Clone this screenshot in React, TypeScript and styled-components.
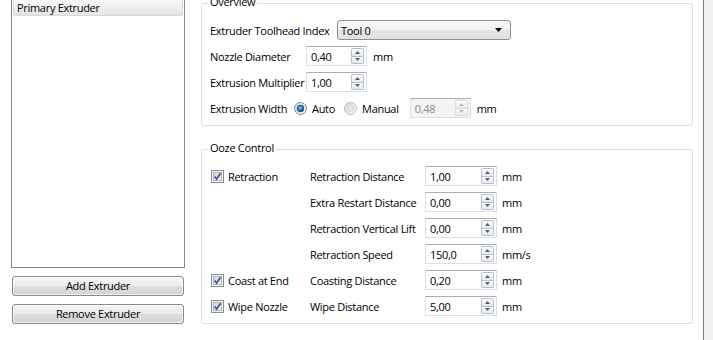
import React from 'react';
import styled, { createGlobalStyle, css } from 'styled-components';

const GlobalStyle = createGlobalStyle`
  html, body {
    margin: 0;
    padding: 0;
    background: #fff;
  }
  body {
    font-family: "Open Sans", "Noto Sans", sans-serif;
    font-size: 11px;
    letter-spacing: -0.3px;
    color: #000;
    overflow: hidden;
  }
`;

const Page = styled.div`
  display: flex;
  width: 713px;
  height: 340px;
  overflow: hidden;
  background: #fff;
`;

const Sidebar = styled.div`
  display: flex;
  flex-direction: column;
  gap: 8px;
  width: 174px;
  margin-left: 11px;
`;

const ListBox = styled.div`
  box-sizing: border-box;
  height: 271px;
  margin-top: -3px;
  border: 1px solid #828790;
  background: #fff;
`;

const ListItem = styled.div<{ $selected?: boolean }>`
  margin: 0 1px;
  padding: 1px 3px 0;
  line-height: 15px;
  border: 1px solid transparent;
  border-radius: 2px;
  white-space: nowrap;
  ${(p) =>
    p.$selected &&
    css`
      border-color: #d9d9d9;
      background: linear-gradient(#fafafa, #e5e5e5);
    `}
`;

const PushButton = styled.button`
  box-sizing: border-box;
  height: 20px;
  margin: 0 1px;
  padding: 0;
  border: 1px solid #8a8a8a;
  border-radius: 3px;
  background: linear-gradient(#f4f4f4 0%, #ececec 50%, #dfdfdf 51%, #d3d3d3 100%);
  box-shadow: inset 0 0 0 1px rgba(255, 255, 255, 0.7);
  font: inherit;
  letter-spacing: inherit;
  color: #000;
  line-height: 16px;
`;

const Main = styled.div`
  display: flex;
  flex-direction: column;
  gap: 14px;
  width: 492px;
  margin: -6px 0 0 16px;
`;

const GroupBox = styled.fieldset`
  box-sizing: border-box;
  margin: 0;
  min-width: 0;
  padding: 7px 8px;
  border: 1px solid #d5dfe5;
  border-radius: 3px;
`;

const GroupTitle = styled.legend`
  margin-left: -2px;
  padding: 0 2px 4px;
  line-height: 15px;
`;

const Rows = styled.div`
  display: flex;
  flex-direction: column;
  gap: 6px;
`;

const Row = styled.div`
  display: flex;
  align-items: center;
  gap: 6px;
  height: 20px;
`;

const Label = styled.span<{ $width?: number }>`
  flex: none;
  white-space: nowrap;
  ${(p) => p.$width !== undefined && `width: ${p.$width}px;`}
`;

const ComboBox = styled.div`
  box-sizing: border-box;
  display: flex;
  align-items: center;
  justify-content: space-between;
  width: 174px;
  height: 20px;
  padding: 0 8px 0 3px;
  border: 1px solid #8e8f8f;
  border-radius: 3px;
  background: linear-gradient(#f9f9f9 0%, #f0f0f0 50%, #e6e6e6 51%, #e0e0e0 100%);
`;

const SpinField = styled.div<{ $width: number; $disabled?: boolean; $offset?: number }>`
  box-sizing: border-box;
  display: flex;
  align-items: center;
  flex: none;
  width: ${(p) => p.$width}px;
  height: 20px;
  margin-left: ${(p) => p.$offset ?? 0}px;
  padding: 0 2px 0 4px;
  border: 1px solid #dbdfe6;
  border-top-color: #abadb3;
  background: ${(p) => (p.$disabled ? '#f4f4f4' : '#fff')};
  color: ${(p) => (p.$disabled ? '#8a8a8a' : '#000')};
`;

const SpinValue = styled.span`
  flex: 1;
  white-space: nowrap;
`;

const SpinButtons = styled.div`
  display: flex;
  flex-direction: column;
  width: 13px;
  height: 16px;
`;

const SpinButton = styled.div<{ $disabled?: boolean }>`
  flex: 1;
  display: flex;
  align-items: center;
  justify-content: center;
  border: 1px solid ${(p) => (p.$disabled ? '#dadcdf' : '#b9bfc8')};
  background: linear-gradient(#fdfdfd, #e6e9ee);
  &:first-child {
    border-radius: 2px 2px 0 0;
  }
  &:last-child {
    border-top: none;
    border-radius: 0 0 2px 2px;
  }
`;

const Option = styled.label<{ $offset?: number }>`
  display: flex;
  align-items: center;
  gap: 5px;
  margin-left: ${(p) => p.$offset ?? 0}px;
  white-space: nowrap;
`;

const OozeGrid = styled.div`
  display: grid;
  grid-template-columns: 95px 110px 72px auto;
  grid-auto-rows: 20px;
  column-gap: 5px;
  row-gap: 6px;
  align-items: center;
`;

const CheckCell = styled(Option)`
  gap: 4px;
  margin-left: 1px;
`;

const EdgePanel = styled.div`
  flex: 1;
  margin-left: 10px;
  border-left: 1px solid #7f7f7f;
  background: #f0f0f0;
`;

function Arrow({ up, disabled }: { up?: boolean; disabled?: boolean }) {
  return (
    <svg width="5" height="3" viewBox="0 0 5 3">
      <path d={up ? 'M0 3 L2.5 0 L5 3 Z' : 'M0 0 L5 0 L2.5 3 Z'} fill={disabled ? '#b4b9c2' : '#4d5d7c'} />
    </svg>
  );
}

function SpinBox({ value, width, disabled, offset }: { value: string; width: number; disabled?: boolean; offset?: number }) {
  return (
    <SpinField $width={width} $disabled={disabled} $offset={offset}>
      <SpinValue>{value}</SpinValue>
      <SpinButtons>
        <SpinButton $disabled={disabled}>
          <Arrow up disabled={disabled} />
        </SpinButton>
        <SpinButton $disabled={disabled}>
          <Arrow disabled={disabled} />
        </SpinButton>
      </SpinButtons>
    </SpinField>
  );
}

function CheckBox() {
  return (
    <svg width="13" height="13" viewBox="0 0 13 13">
      <defs>
        <linearGradient id="cbFill" x1="0" y1="0" x2="1" y2="1">
          <stop offset="0" stopColor="#cdd1d7" />
          <stop offset="1" stopColor="#f7f7f8" />
        </linearGradient>
      </defs>
      <rect x="0.5" y="0.5" width="12" height="12" fill="#f4f4f4" stroke="#8e8f8f" />
      <rect x="2.5" y="2.5" width="8" height="8" fill="url(#cbFill)" stroke="#b4b8bd" />
      <path d="M3.6 6.4 L5.6 9 L9.6 3.2" fill="none" stroke="#3f5596" strokeWidth="1.7" />
    </svg>
  );
}

function Radio({ checked }: { checked?: boolean }) {
  return (
    <svg width="13" height="13" viewBox="0 0 13 13">
      <defs>
        <linearGradient id="rbRing" x1="0" y1="0" x2="1" y2="1">
          <stop offset="0" stopColor="#d7d9dc" />
          <stop offset="1" stopColor="#fafafa" />
        </linearGradient>
        <radialGradient id="rbDot" cx="0.45" cy="0.4" r="0.6">
          <stop offset="0" stopColor="#8fdcf9" />
          <stop offset="0.55" stopColor="#1f7ab8" />
          <stop offset="1" stopColor="#0d3f70" />
        </radialGradient>
      </defs>
      <circle cx="6.5" cy="6.5" r="6" fill="url(#rbRing)" stroke={checked ? '#7d8d9c' : '#b9bdc2'} />
      {checked ? (
        <circle cx="6.5" cy="6.5" r="3.4" fill="url(#rbDot)" stroke="#1d4a73" strokeWidth="0.6" />
      ) : (
        <circle cx="6.5" cy="6.5" r="3.4" fill="#e4e5e7" stroke="#d0d2d5" strokeWidth="0.6" />
      )}
    </svg>
  );
}

const oozeRows = [
  { check: 'Retraction', label: 'Retraction Distance', value: '1,00', unit: 'mm' },
  { label: 'Extra Restart Distance', value: '0,00', unit: 'mm' },
  { label: 'Retraction Vertical Lift', value: '0,00', unit: 'mm' },
  { label: 'Retraction Speed', value: '150,0', unit: 'mm/s' },
  { check: 'Coast at End', label: 'Coasting Distance', value: '0,20', unit: 'mm' },
  { check: 'Wipe Nozzle', label: 'Wipe Distance', value: '5,00', unit: 'mm' },
];

export default function App() {
  return (
    <>
      <GlobalStyle />
      <Page>
        <Sidebar>
          <ListBox>
            <ListItem $selected>Primary Extruder</ListItem>
          </ListBox>
          <PushButton>Add Extruder</PushButton>
          <PushButton>Remove Extruder</PushButton>
        </Sidebar>

        <Main>
          <GroupBox>
            <GroupTitle>Overview</GroupTitle>
            <Rows>
              <Row>
                <Label $width={121}>Extruder Toolhead Index</Label>
                <ComboBox>
                  <span>Tool 0</span>
                  <svg width="7" height="4" viewBox="0 0 7 4">
                    <path d="M0 0 L7 0 L3.5 4 Z" fill="#000" />
                  </svg>
                </ComboBox>
              </Row>
              <Row>
                <Label $width={90}>Nozzle Diameter</Label>
                <SpinBox value="0,40" width={61} />
                <span>mm</span>
              </Row>
              <Row>
                <Label $width={90}>Extrusion Multiplier</Label>
                <SpinBox value="1,00" width={61} />
              </Row>
              <Row>
                <Label $width={78}>Extrusion Width</Label>
                <Option>
                  <Radio checked />
                  Auto
                </Option>
                <Option $offset={3}>
                  <Radio />
                  Manual
                </Option>
                <SpinBox value="0,48" width={61} disabled offset={5} />
                <span>mm</span>
              </Row>
            </Rows>
          </GroupBox>

          <GroupBox>
            <GroupTitle>Ooze Control</GroupTitle>
            <OozeGrid>
              {oozeRows.map((r) => (
                <React.Fragment key={r.label}>
                  {r.check ? (
                    <CheckCell>
                      <CheckBox />
                      {r.check}
                    </CheckCell>
                  ) : (
                    <span />
                  )}
                  <Label>{r.label}</Label>
                  <SpinBox value={r.value} width={72} />
                  <span>{r.unit}</span>
                </React.Fragment>
              ))}
            </OozeGrid>
          </GroupBox>
        </Main>

        <EdgePanel />
      </Page>
    </>
  );
}
